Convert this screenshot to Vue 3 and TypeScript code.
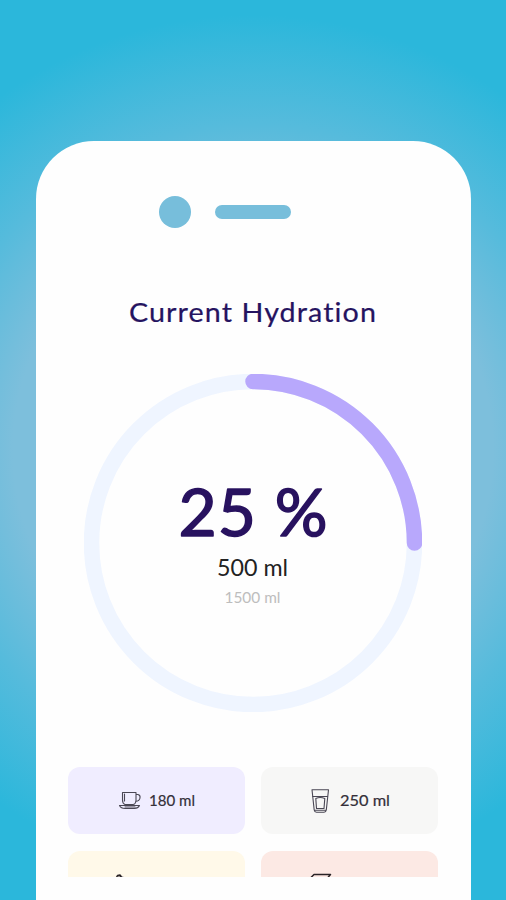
<script setup lang="ts">
import { computed, ref } from 'vue'

interface Drink {
  kind: 'cup' | 'glass' | 'bottle' | 'carton'
  label: string
  tone: string
}

const percent = ref(25)
const radius = 161.5
const circumference = 2 * Math.PI * radius
const dash = computed(() => `${(circumference * percent.value) / 100} ${circumference}`)

const drinks: Drink[] = [
  { kind: 'cup', label: '180 ml', tone: 'lilac' },
  { kind: 'glass', label: '250 ml', tone: 'grey' },
  { kind: 'bottle', label: '', tone: 'cream' },
  { kind: 'carton', label: '', tone: 'rose' },
]
</script>

<template>
  <main class="stage">
    <section class="phone">
      <div class="sensors">
        <span class="camera"></span>
        <span class="speaker"></span>
      </div>
      <svg class="title" viewBox="0 0 435 44" role="heading">
        <text x="93" y="32" textLength="248" lengthAdjust="spacingAndGlyphs">Current Hydration</text>
      </svg>
      <svg class="gauge" viewBox="0 0 338 338">
        <circle class="track" cx="169" cy="169" :r="radius" />
        <circle class="progress" cx="169" cy="169" :r="radius" :stroke-dasharray="dash" transform="rotate(-90 169 169)" />
        <text class="percent" x="94.5" y="161.5" textLength="150" lengthAdjust="spacingAndGlyphs">{{ percent }} %</text>
        <text class="current" x="133" y="202" textLength="71" lengthAdjust="spacingAndGlyphs">500 ml</text>
        <text class="goal" x="140.5" y="229" textLength="56" lengthAdjust="spacingAndGlyphs">1500 ml</text>
      </svg>
      <div class="drinks">
        <button v-for="d in drinks" :key="d.kind" class="drink" :class="[d.tone, d.kind]">
          <svg v-if="d.kind === 'cup'" class="icon" viewBox="0 0 24 24">
            <path d="M4.5 3.5H18V11.5Q17.5 15.5 15 15.5H7Q4.5 14.5 4.5 11ZM18 5.5H20Q22.5 6 22 9Q21.5 12 17.5 12.5M6.5 5V12M1.5 16.5H21.5Q20 19.5 16.5 19.5H7Q3 19.5 1.5 16.5ZM7 18H17" />
          </svg>
          <svg v-else-if="d.kind === 'glass'" class="icon" viewBox="0 0 24 24">
            <path d="M4 .8H20.5L18.3 21Q18 23.2 16 23.2H8.5Q6.5 23.2 6.2 21ZM4.5 7.5H19.7M7.8 9.5Q12 7.5 16.8 9.5L16 19.5H8.5ZM7 21.2H17.5" />
          </svg>
          <svg v-else-if="d.kind === 'bottle'" class="icon" viewBox="0 0 24 24">
            <path class="bold" d="M1.5 4.5L2.5 2.5L5 2L6.5 4L3.5 4.2" />
            <path d="M6.5 4L12 5.2L20 14L13 21L4 12Z" />
          </svg>
          <svg v-else class="icon" viewBox="0 0 24 24">
            <path class="bold" d="M2 4.5L5 1.5H21.5L18.5 5M2 4.5L9 5" />
            <path d="M2 5V22H18V6" />
          </svg>
          <svg v-if="d.label" class="amount" :viewBox="d.kind === 'cup' ? '0 0 46 20' : '0 0 50 20'">
            <text x="0" y="15" :textLength="d.kind === 'cup' ? 46 : 50" lengthAdjust="spacingAndGlyphs">{{ d.label }}</text>
          </svg>
        </button>
      </div>
    </section>
  </main>
</template>

<style>
body {
  margin: 0;
}
</style>

<style scoped>
.stage {
  box-sizing: border-box;
  width: 506px;
  height: 900px;
  padding: 141px 35px 0 35.5px;
  overflow: hidden;
  background: radial-gradient(circle at 253px 450px, #7dbfdc 240px, #56bbdc 325px, #2bb7db 435px);
  font-family: Lato, "Liberation Sans", sans-serif;
  font-variant-ligatures: none;
}
.phone {
  display: flex;
  flex-direction: column;
  height: 759px;
  background: #fefefe;
  border-radius: 58px 58px 0 0;
}
.sensors {
  display: flex;
  align-items: center;
  gap: 24px;
  height: 32px;
  padding: 55px 0 0 123.5px;
}
.camera {
  width: 32px;
  height: 32px;
  border-radius: 50%;
  background: #77bedb;
}
.speaker {
  width: 76px;
  height: 14.5px;
  border-radius: 8px;
  background: #77bedb;
}
.title {
  width: 435px;
  height: 44px;
  margin-top: 62px;
}
.title text {
  font-size: 26.5px;
  letter-spacing: 1px;
  fill: #251360;
  stroke: #251360;
  stroke-width: 0.2px;
  stroke-linejoin: round;
}
.gauge {
  width: 338px;
  height: 338px;
  margin: 40px 0 0 48.5px;
}
.gauge circle {
  fill: none;
  stroke-width: 15.5px;
}
.track {
  stroke: #eff5ff;
}
.progress {
  stroke: #b8a8fc;
  stroke-linecap: round;
}
.percent {
  font-size: 65px;
  letter-spacing: 1px;
  fill: #28125f;
  stroke: #28125f;
  stroke-width: 1.5px;
  stroke-linejoin: round;
}
.current {
  font-size: 24px;
  fill: #222;
}
.goal {
  font-size: 16px;
  fill: #bdbdbd;
}
.drinks {
  display: grid;
  grid-template-columns: 177px 177px;
  grid-auto-rows: 67px;
  gap: 17px 16px;
  height: 110px;
  margin: 55px 0 0 32.5px;
  overflow: hidden;
}
.drink {
  display: flex;
  align-items: center;
  gap: 7px;
  padding: 0 0 0 50px;
  border: 0;
  border-radius: 12px;
  font-family: inherit;
}
.lilac { background: #f0edff; }
.grey { background: #f7f7f6; }
.cream { background: #fff9e9; }
.rose { background: #fce9e4; }
.icon {
  width: 24px;
  height: 24px;
  fill: none;
  stroke: #4a4754;
  stroke-width: 1.1px;
  stroke-linecap: round;
  stroke-linejoin: round;
}
.bold {
  stroke: #292326;
  stroke-width: 1.5px;
}
.glass {
  gap: 8px;
  padding-left: 47px;
}
.bottle {
  padding-left: 47px;
}
.carton {
  padding-left: 48px;
}
.amount {
  width: 46px;
  height: 20px;
  overflow: visible;
}
.glass .amount {
  width: 50px;
}
.amount text {
  font-size: 15.5px;
  fill: #343039;
  stroke: #343039;
  stroke-width: 0.2px;
}
</style>
